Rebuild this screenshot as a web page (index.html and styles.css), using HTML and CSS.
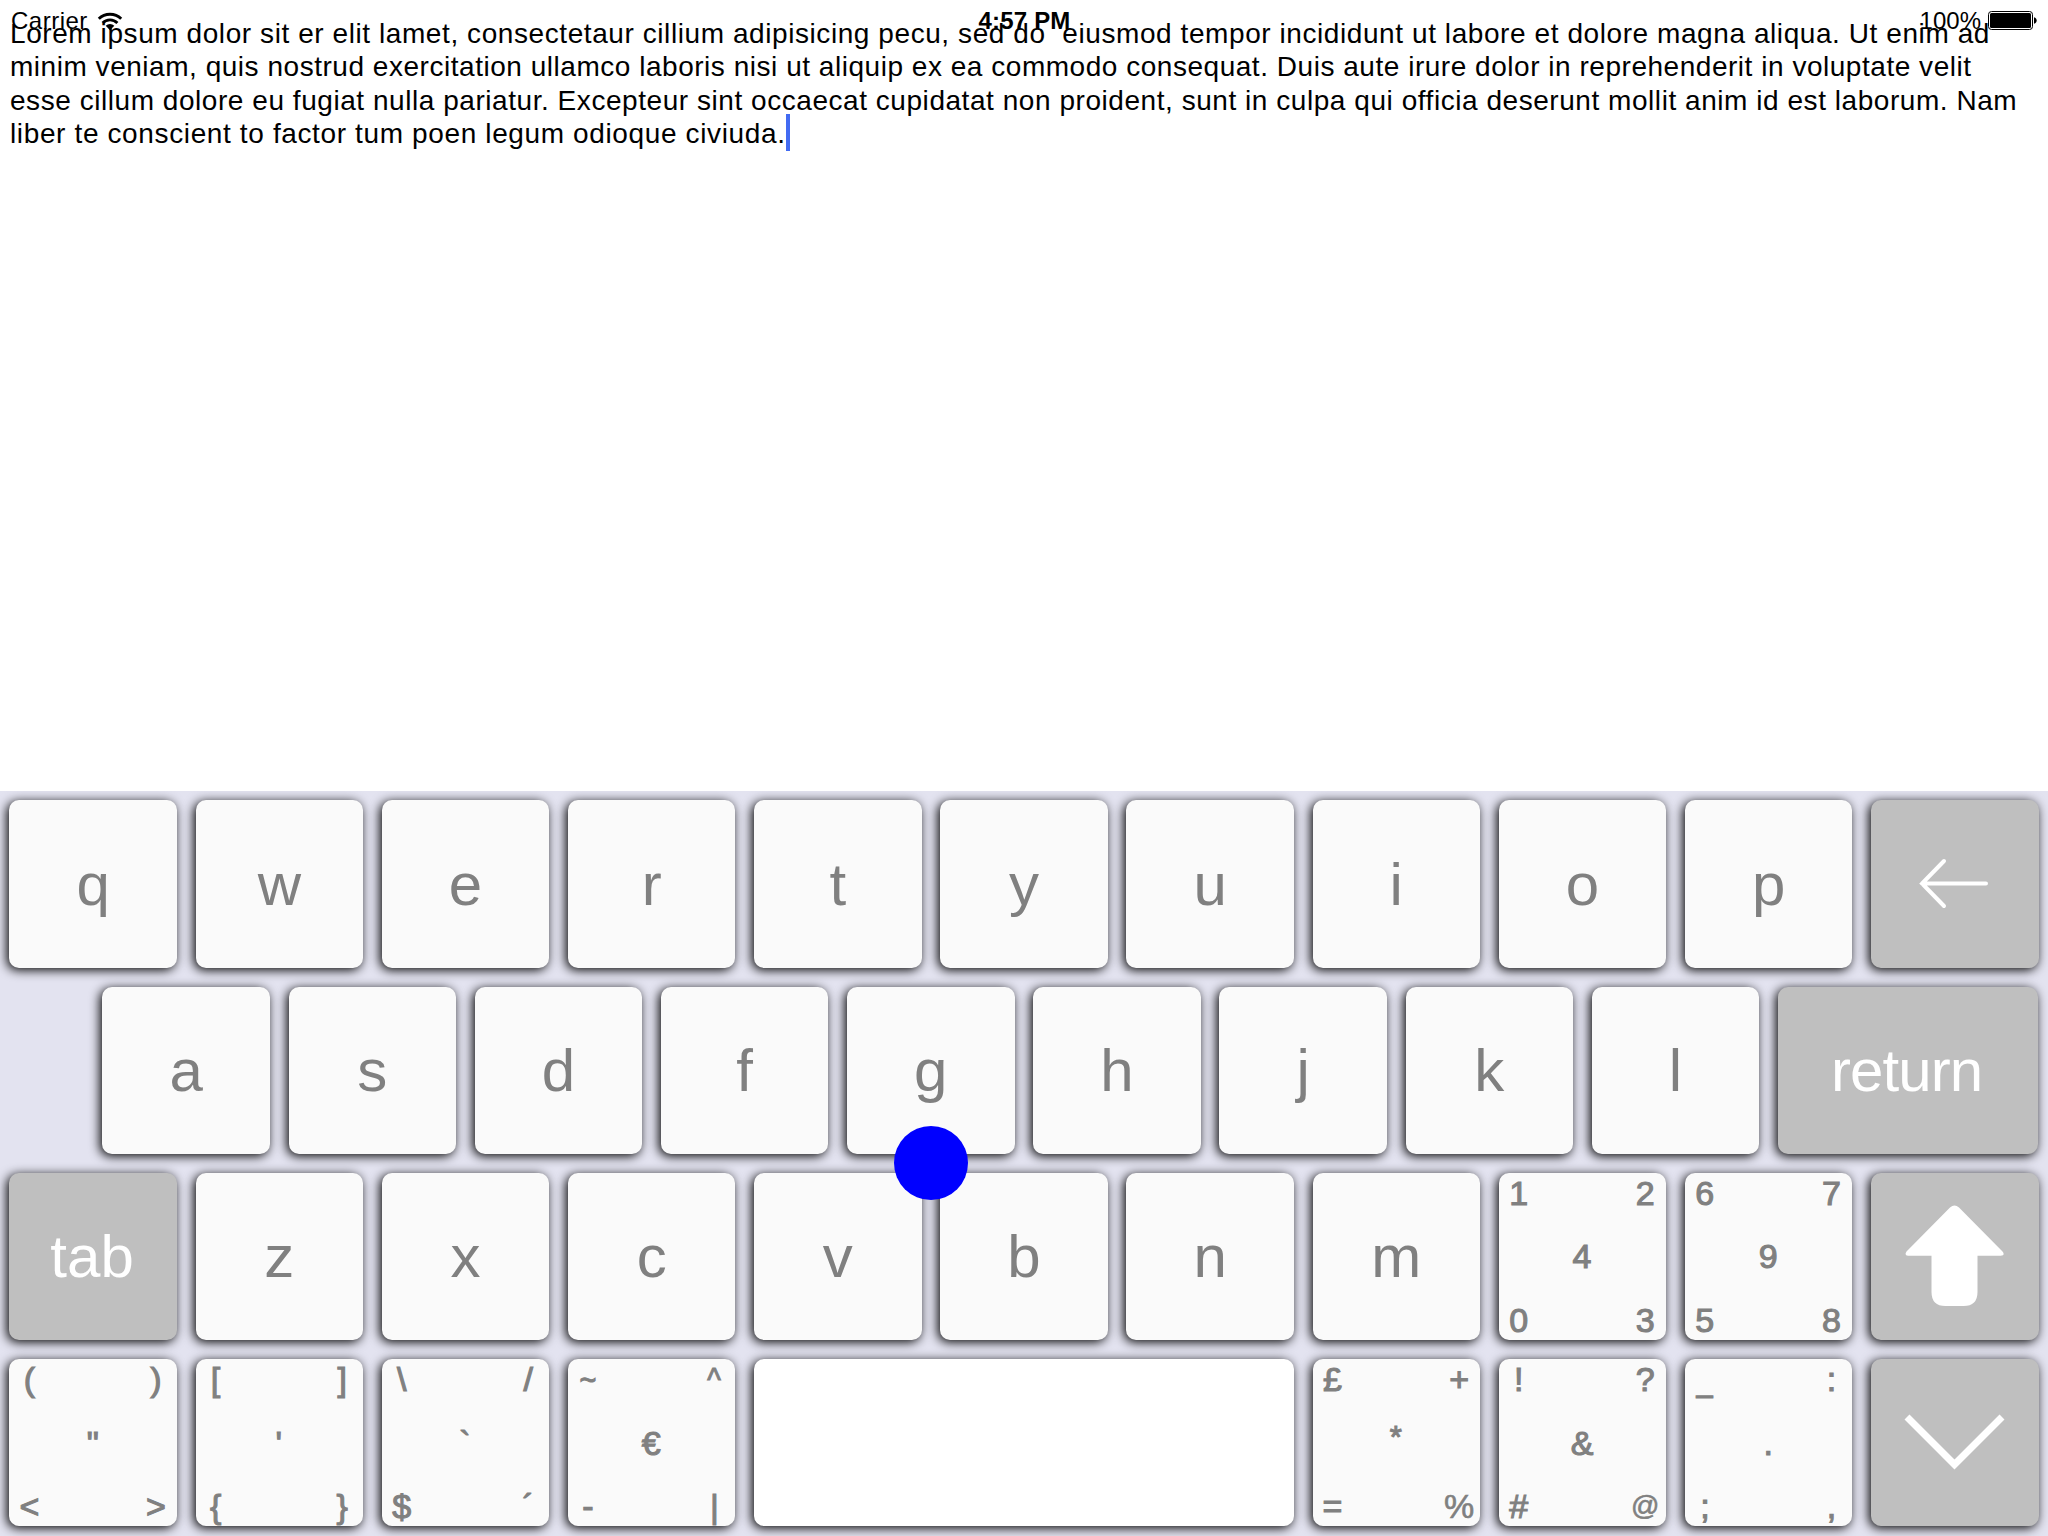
FILE: index.html
```html
<!DOCTYPE html>
<html lang="en">
<head>
<meta charset="utf-8">
<title>Keyboard</title>
<link rel="stylesheet" href="styles.css">
</head>
<body>
<main class="screen">
  <header class="status">
    <div class="status-left">
      <span class="carrier">Carrier</span>
      <svg class="wifi" width="26" height="19" viewBox="0 0 26 19">
        <path d="M1.8 6.8A16 16 0 0 1 24.2 6.8M5.6 11A10.4 10.4 0 0 1 20.4 11" fill="none" stroke="#000" stroke-width="2.9"/>
        <path d="M8.7 13.8A6.1 6.1 0 0 1 17.3 13.8L13 18.2Z"/>
      </svg>
    </div>
    <span class="time">4:57 PM</span>
    <div class="status-right">
      <span class="percent">100%</span>
      <svg class="battery" width="50" height="20" viewBox="0 0 50 20">
        <rect x="0.5" y="0.5" width="44" height="18" rx="3" fill="#fff" stroke="#000"/>
        <rect x="2" y="2" width="41" height="15" rx="1.5"/>
        <path d="M46 6.2C49.6 7 49.6 12 46 12.8Z"/>
      </svg>
    </div>
  </header>
  <section class="editor">
    <p class="line line-1">Lorem ipsum dolor sit er elit lamet, consectetaur cillium adipisicing pecu, sed do&nbsp; eiusmod tempor incididunt ut labore et dolore magna aliqua. Ut enim ad</p>
    <p class="line line-2">minim veniam, quis nostrud exercitation ullamco laboris nisi ut aliquip ex ea commodo consequat. Duis aute irure dolor in reprehenderit in voluptate velit</p>
    <p class="line line-3">esse cillum dolore eu fugiat nulla pariatur. Excepteur sint occaecat cupidatat non proident, sunt in culpa qui officia deserunt mollit anim id est laborum. Nam</p>
    <p class="line line-4">liber te conscient to factor tum poen legum odioque civiuda.<span class="caret"></span></p>
  </section>
  <section class="keyboard">
    <div class="row">
      <div class="key">q</div><div class="key">w</div><div class="key">e</div><div class="key">r</div><div class="key">t</div><div class="key">y</div><div class="key">u</div><div class="key">i</div><div class="key">o</div><div class="key">p</div>
      <div class="key special">
        <svg width="168" height="168" viewBox="0 0 168 168" fill="none" stroke="#fff" stroke-width="4" stroke-linecap="round">
          <path d="M115 83.5H51M73 61L51 83.5L73 106"/>
        </svg>
      </div>
    </div>
    <div class="row row-indent">
      <div class="key">a</div><div class="key">s</div><div class="key">d</div><div class="key">f</div><div class="key">g</div><div class="key">h</div><div class="key">j</div><div class="key">k</div><div class="key">l</div>
      <div class="key special key-return">return</div>
    </div>
    <div class="row">
      <div class="key special key-tab">tab</div><div class="key">z</div><div class="key">x</div><div class="key">c</div><div class="key">v</div><div class="key">b</div><div class="key">n</div><div class="key">m</div>
      <div class="key multi"><i>1</i><i></i><i>2</i><i></i><i>4</i><i></i><i>0</i><i></i><i>3</i></div>
      <div class="key multi"><i>6</i><i></i><i>7</i><i></i><i>9</i><i></i><i>5</i><i></i><i>8</i></div>
      <div class="key special">
        <svg width="168" height="168" viewBox="0 0 168 168" fill="#fff">
          <path d="M79 35.5Q83.5 31.5 88 35.5L131.5 79.5Q134.5 83.5 129.5 83.7H106.5V120Q106.5 134 92.5 134H74.5Q60.5 134 60.5 120V83.7H37Q33 83.5 35.5 79.5Z"/>
        </svg>
      </div>
    </div>
    <div class="row">
      <div class="key multi"><i>(</i><i></i><i>)</i><i></i><i>"</i><i></i><i>&lt;</i><i></i><i>&gt;</i></div>
      <div class="key multi"><i>[</i><i></i><i>]</i><i></i><i>'</i><i></i><i>{</i><i></i><i>}</i></div>
      <div class="key multi"><i>\</i><i></i><i>/</i><i></i><i>`</i><i></i><i>$</i><i></i><i>´</i></div>
      <div class="key multi"><i class="narrow">~</i><i></i><i class="narrow">^</i><i></i><i>€</i><i></i><i>-</i><i></i><i>|</i></div>
      <div class="key key-space"></div>
      <div class="key multi"><i>£</i><i></i><i>+</i><i></i><i class="star">*</i><i></i><i>=</i><i></i><i class="light">%</i></div>
      <div class="key multi"><i>!</i><i></i><i>?</i><i></i><i>&amp;</i><i></i><i>#</i><i></i><i class="light at">@</i></div>
      <div class="key multi"><i class="narrow">_</i><i></i><i>:</i><i></i><i>.</i><i></i><i>;</i><i></i><i>,</i></div>
      <div class="key special">
        <svg width="168" height="168" viewBox="0 0 168 168" fill="none" stroke="#fff" stroke-width="7">
          <path d="M36 58L83.5 105.5L131 58"/>
        </svg>
      </div>
    </div>
    <div class="pointer"></div>
  </section>
</main>
</body>
</html>
```
FILE: styles.css
```css
* { box-sizing: border-box; }

body {
  margin: 0;
  background: #fff;
  font-family: "Liberation Sans", Arial, Helvetica, sans-serif;
}

.screen {
  position: relative;
  display: flex;
  flex-direction: column;
  width: 2048px;
  height: 1536px;
  overflow: hidden;
}

/* The status bar floats over the text view. */
.status {
  position: absolute;
  inset: 0 0 auto 0;
  display: grid;
  grid-template-columns: 1fr auto 1fr;
  align-items: center;
  height: 40px;
  padding: 1px 10px 0 11px;
  font-size: 24px;
  line-height: 40px;
}

.status-left, .status-right { display: flex; align-items: center; }
.status-right { justify-content: flex-end; }
.carrier { letter-spacing: 0.5px; }
.wifi { margin-left: 9px; }
.time { font-weight: bold; letter-spacing: 0.2px; }
.percent { margin-right: 7px; }

.editor {
  flex: 1;
  padding: 17px 10px 0;
}

.line {
  margin: 0;
  height: 33.4px;
  font-size: 28px;
  line-height: 33.4px;
  white-space: nowrap;
}

.line-1 { letter-spacing: 0.578px; }
.line-2 { letter-spacing: 0.529px; }
.line-3 { letter-spacing: 0.548px; }
.line-4 { letter-spacing: 0.63px; }

.caret {
  display: inline-block;
  width: 4px;
  height: 37px;
  margin: -3px 0 -8px 0;
  vertical-align: top;
  background: #426bf2;
}

.keyboard {
  position: relative;
  display: flex;
  flex-direction: column;
  gap: 18.62px;
  height: 744.73px;
  padding: 9.1px 9px 9px 9.42px;
  overflow: hidden;
  background: #e3e3f0;
}

.row { display: flex; gap: 18.62px; height: 167.56px; }
.row-indent { padding-left: 93px; }

.key {
  display: flex;
  flex: none;
  align-items: center;
  justify-content: center;
  width: 167.56px;
  height: 167.56px;
  padding-top: 2px;
  border-radius: 10px;
  background: #fafafa;
  box-shadow: -2px 2px 11px #000;
  color: #808080;
  font-size: 60px;
  line-height: 1;
}

.special { background: #bfbfbf; color: #fff; }
.special svg { display: block; flex: none; margin-top: -2px; }
.key-return { width: 260.65px; padding-right: 3px; letter-spacing: -0.9px; }
.key-tab { padding-right: 2px; letter-spacing: 0.2px; }
.key-space { width: 539.92px; background: #fff; }

.multi {
  display: grid;
  grid-template-columns: 40px 1fr 40px;
  grid-template-rows: 40px 1fr 40px;
  justify-items: center;
  align-items: center;
  padding: 0 1px 0 0;
  font-size: 34px;
  -webkit-text-stroke: 1.1px #808080;
}
.multi i { font-style: normal; }
.multi .light { -webkit-text-stroke-width: 0.6px; }
.multi .at { font-size: 28px; -webkit-text-stroke-width: 0.6px; }
.multi .star { font-size: 31px; transform: translateY(-5px); }
.multi .narrow { transform: scaleX(0.85); }

.pointer {
  position: absolute;
  left: 894px;
  top: 335px;
  width: 74px;
  height: 74px;
  border-radius: 50%;
  background: #00f;
}
```
